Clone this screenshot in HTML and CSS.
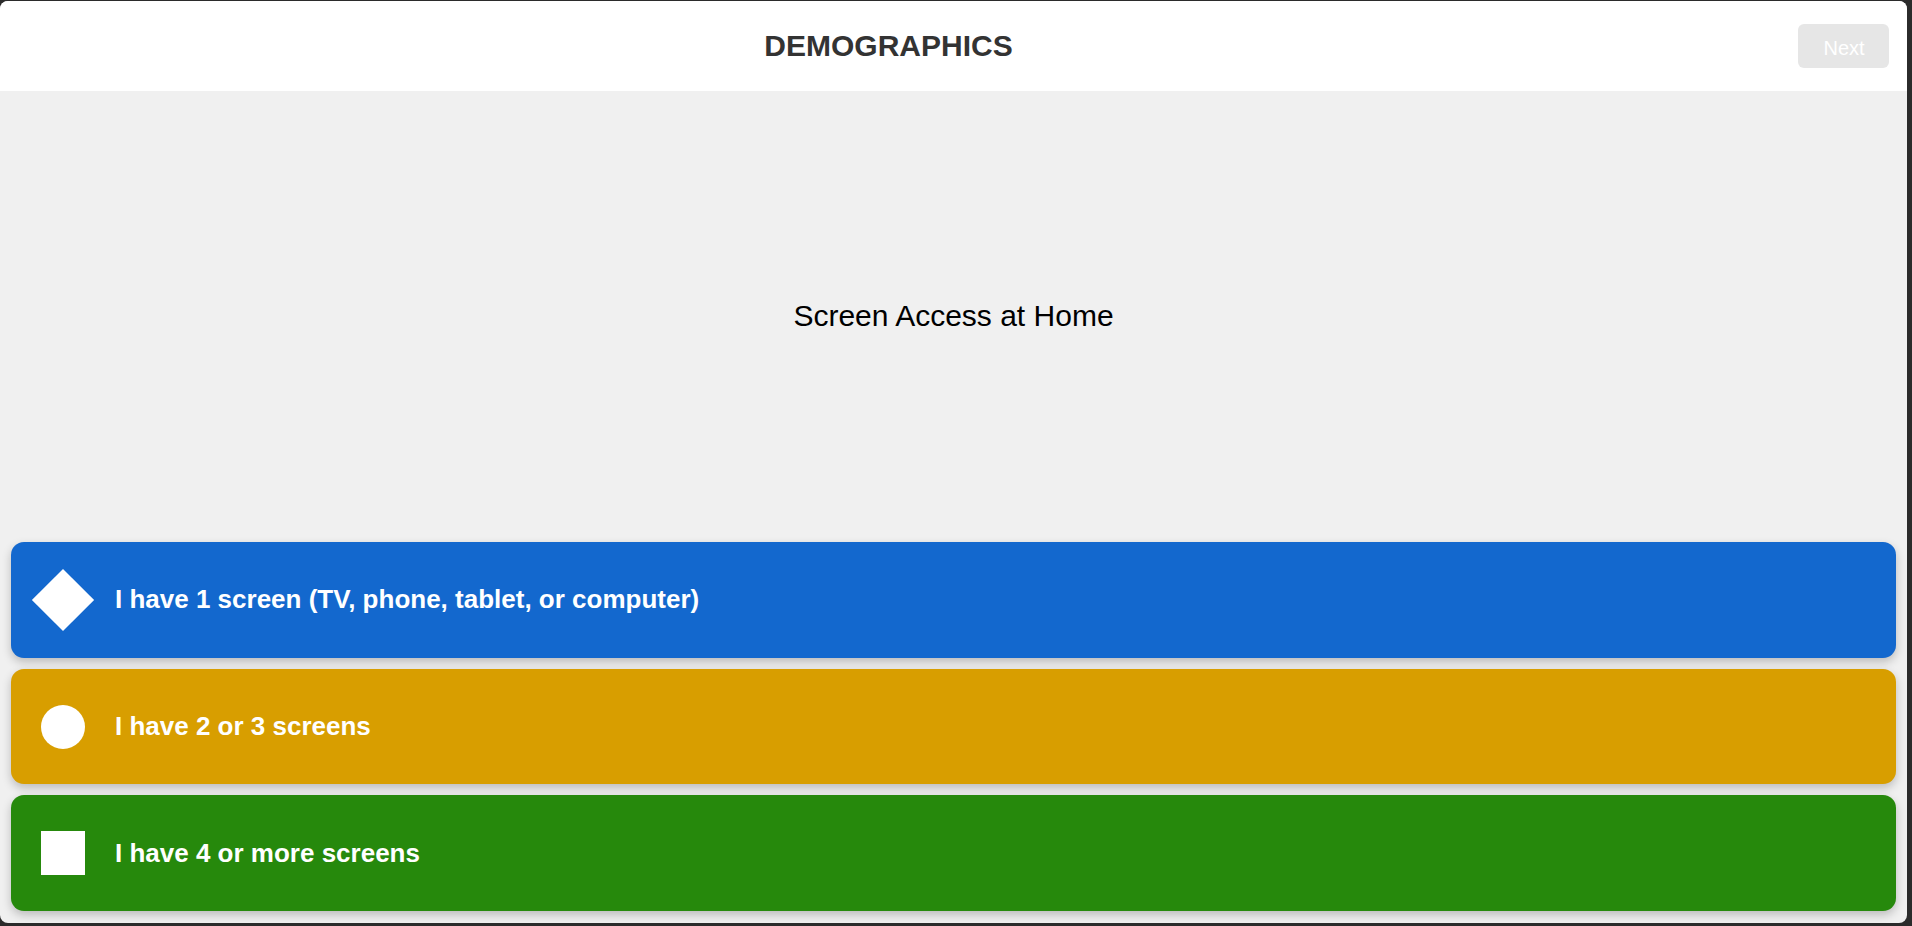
FILE: index.html
```html
<!DOCTYPE html>
<html lang="en">
<head>
<meta charset="utf-8">
<title>Demographics</title>
<link rel="stylesheet" href="styles.css">
</head>
<body>
<div class="app">
  <header class="topbar">
    <h1 class="title">DEMOGRAPHICS</h1>
    <button class="next" disabled>Next</button>
  </header>
  <main class="main">
    <div class="question">Screen Access at Home</div>
    <div class="options">
      <div class="option blue"><span class="icon diamond"></span><span class="label">I have 1 screen (TV, phone, tablet, or computer)</span></div>
      <div class="option gold"><span class="icon circle"></span><span class="label">I have 2 or 3 screens</span></div>
      <div class="option green"><span class="icon square"></span><span class="label">I have 4 or more screens</span></div>
    </div>
  </main>
</div>
</body>
</html>
```
FILE: styles.css
```css
html, body {
  margin: 0;
  padding: 0;
  height: 100%;
}
body {
  background: #2b2b2b;
  font-family: "Liberation Sans", Arial, sans-serif;
  overflow: hidden;
}
.app {
  margin: 1px 5px 3px 0;
  height: 922px;
  border-radius: 8px;
  overflow: hidden;
  background: #f0f0f0;
  display: flex;
  flex-direction: column;
}
.topbar {
  height: 90px;
  flex: 0 0 90px;
  background: #ffffff;
  display: flex;
  align-items: center;
}
.title {
  flex: 1;
  margin: 0;
  text-align: center;
  font-size: 30px;
  font-weight: bold;
  color: #333333;
}
.next {
  margin: 0 18px 0 21px;
  width: 91px;
  height: 44px;
  border: none;
  border-radius: 6px;
  background: #e6e6e6;
  color: #ffffff;
  font-family: "Liberation Sans", Arial, sans-serif;
  font-size: 20px;
  padding: 4px 0 0 1px;
}
.main {
  flex: 1;
  display: flex;
  flex-direction: column;
}
.question {
  flex: 1;
  display: flex;
  align-items: center;
  justify-content: center;
  padding-top: 10px;
  font-size: 30px;
  color: #000000;
}
.options {
  display: flex;
  flex-direction: column;
  gap: 11px;
  padding: 11px 11px 12px;
}
.option {
  height: 115.67px;
  border-radius: 13px;
  display: flex;
  align-items: center;
  box-shadow: 0 4px 10px rgba(0, 0, 0, 0.22);
  color: #ffffff;
}
.blue { background: #1368ce; }
.gold { background: #d89e00; }
.green { background: #26890c; }
.icon {
  width: 44px;
  height: 44px;
  margin-left: 30px;
  background: #ffffff;
  flex: 0 0 44px;
}
.diamond {
  transform: rotate(45deg);
}
.circle {
  border-radius: 50%;
}
.label {
  margin-left: 30px;
  font-size: 26px;
  font-weight: bold;
}
```
